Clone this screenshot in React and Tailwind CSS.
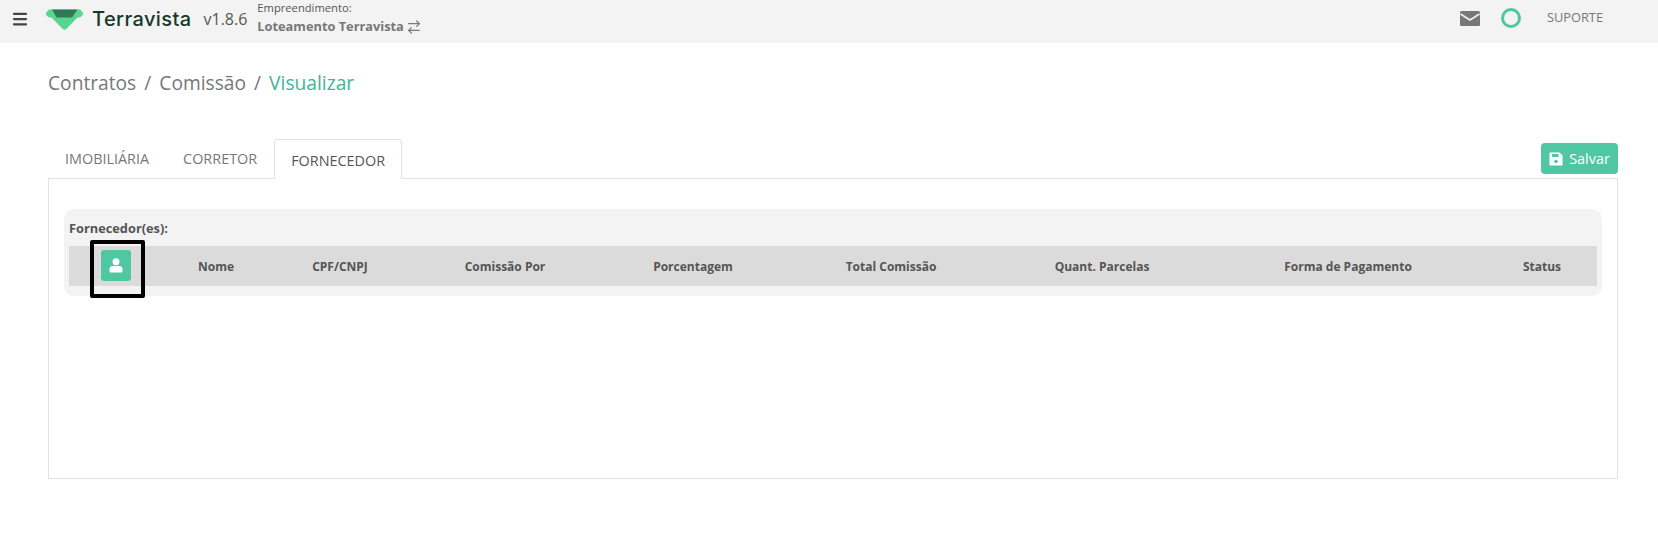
import { Menu, ArrowRightLeft } from "lucide-react";

const columns = ["Nome", "CPF/CNPJ", "Comissão Por", "Porcentagem", "Total Comissão", "Quant. Parcelas", "Forma de Pagamento", "Status"];

function Logo() {
  return (
    <svg width="39" height="21" viewBox="0 0 39 21" className="shrink-0">
      <path d="M5 0.500H34C35 0.500 35.800 1 36.500 2L38.500 5L36 7.800C35.500 8.300 34.800 8.500 34 8.500H5C4.200 8.500 3.500 8.300 3 7.800L0.500 5L2.500 2C3.200 1 4 0.500 5 0.500Z" fill="#56d68e" />
      <path d="M5.500 7.500H33.500L21.500 19.800C20.300 21 18.700 21 17.500 19.800Z" fill="#56d68e" />
      <path d="M7 0.500H32.500L27 8.500H11.500Z" fill="#2f7a54" />
    </svg>
  );
}

function MailIcon() {
  return (
    <svg width="20" height="15" viewBox="0 0 20 15">
      <rect width="20" height="15" rx="1.500" fill="#777" />
      <path d="M0.500 3L10 9L19.500 3" fill="none" stroke="#f3f3f3" strokeWidth="1.500" />
    </svg>
  );
}

function SaveIcon() {
  return (
    <svg width="14" height="14" viewBox="0 0 14 14" className="shrink-0">
      <path d="M1.500 0.500H10.500L13.500 3.500V12.500C13.500 13.100 13.100 13.500 12.500 13.500H1.500C0.900 13.500 0.500 13.100 0.500 12.500V1.500C0.500 0.900 0.900 0.500 1.500 0.500Z" fill="white" />
      <rect x="3" y="2" width="6.500" height="3" fill="#4fc8a2" />
      <circle cx="7" cy="9.500" r="1.800" fill="#4fc8a2" />
    </svg>
  );
}

function PersonIcon() {
  return (
    <svg width="14" height="15" viewBox="0 0 14 15">
      <circle cx="7" cy="3.700" r="3.500" fill="white" />
      <path d="M3.500 8H10.500C12.500 8 13.500 9.500 13.500 11.500V13C13.500 14 13 14.500 12 14.500H2C1 14.500 0.500 14 0.500 13V11.500C0.500 9.500 1.500 8 3.500 8Z" fill="white" />
    </svg>
  );
}

function App() {
  return (
    <div className="min-h-[540px] bg-white font-['Open_Sans',sans-serif] text-[#777]">
      <header className="flex h-[43px] items-center bg-[#f3f3f3] pl-[11px]">
        <Menu size={18} strokeWidth={3} className="mb-[6px] text-[#444]" />
        <div className="mb-[5px] ml-[16px] flex items-center">
          <Logo />
        </div>
        <span className="mb-[6px] ml-[8px] font-['Inter',sans-serif] text-[20px] font-medium leading-none tracking-[0.400px] text-[#16382a]">Terravista</span>
        <span className="mb-[5px] ml-[12px] text-[16px] text-[#555]">v1.8.6</span>
        <div className="mb-[6px] ml-[10px] flex flex-col leading-none">
          <span className="text-[11.200px] text-[#555]">Empreendimento:</span>
          <span className="mt-[5px] flex items-center gap-[2px] text-[12.800px] font-bold text-[#777]">
            Loteamento Terravista
            <ArrowRightLeft size={16} strokeWidth={1.800} />
          </span>
        </div>
        <div className="ml-auto flex items-center pr-[55px] pb-[7px]">
          <MailIcon />
          <span className="ml-[21px] h-[20px] w-[20px] rounded-full border-[3.500px] border-[#4fc8a2]" />
          <span className="ml-[26px] text-[12.800px]">SUPORTE</span>
        </div>
      </header>

      <div className="pr-[40px] pl-[48px]">
        <nav className="mt-[26px] flex gap-[8px] text-[19.200px] leading-[27px]">
          <span>Contratos</span>
          <span>/</span>
          <span>Comissão</span>
          <span>/</span>
          <span className="text-[#3db598]">Visualizar</span>
        </nav>

        <div className="mt-[42px] flex items-end justify-between">
          <div className="flex h-[40px] text-[14.400px]">
            <div className="flex items-center px-[17px] pt-[2px]">IMOBILIÁRIA</div>
            <div className="flex items-center px-[17px] pt-[2px]">CORRETOR</div>
            <div className="relative top-[1px] flex items-center rounded-t-[4px] border border-b-0 border-[#dfe2e8] bg-white px-[16px] pt-[2px] text-[#555]">FORNECEDOR</div>
          </div>
          <button className="mb-[4px] flex h-[31px] w-[77px] items-center justify-center gap-[6px] rounded-[4px] bg-[#4fc8a2] text-[14.400px] text-white">
            <SaveIcon />
            Salvar
          </button>
        </div>

        <section className="h-[301px] border border-[#dfe2e8] px-[15px] pt-[30px]">
          <div className="rounded-[10px] bg-[#f3f3f3] px-[5px] pt-[10px] pb-[10px]">
            <p className="pt-[1px] text-[12.800px] font-bold leading-[17px] text-[#555]">Fornecedor(es):</p>
            <div className="relative mt-[9px] grid h-[40px] grid-cols-[94px_106px_142px_188px_188px_208px_214px_278px_110px] items-center bg-[#dbdbdb] text-[12px] font-bold text-[#555]">
              <div className="flex justify-center">
                <span className="mb-[1px] flex h-[31px] w-[30px] items-center justify-center rounded-[3px] bg-[#4fc8a2]">
                  <PersonIcon />
                </span>
              </div>
              {columns.map((c) => (
                <div key={c} className="pt-[1px] text-center">{c}</div>
              ))}
              <div className="absolute top-[-6px] left-[21px] h-[58px] w-[55px] rounded-[2px] border-4 border-black" />
            </div>
          </div>
        </section>
      </div>
    </div>
  );
}

export default App;
